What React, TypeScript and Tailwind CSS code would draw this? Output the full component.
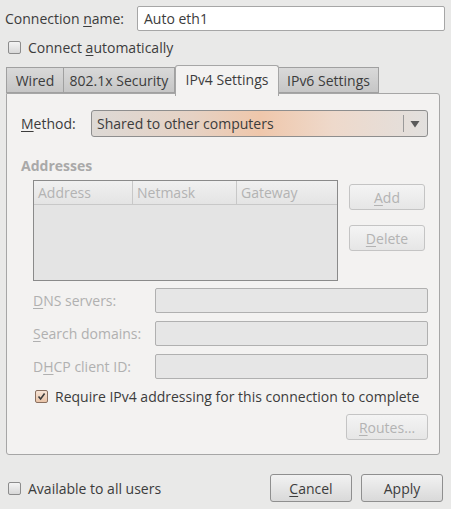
import React from 'react';

const font = { fontFamily: '"Open Sans", "DejaVu Sans", sans-serif' };

function Check({ checked }: { checked?: boolean }) {
  return (
    <span
      className={
        'flex items-center justify-center w-[13px] h-[13px] rounded-[2px] border shrink-0 ' +
        (checked
          ? 'border-[#8a7060] bg-[linear-gradient(#f6e4d6,#e9c4a8)]'
          : 'border-[#8c8c8c] bg-[linear-gradient(#f4f4f4,#d8d8d8)]')
      }
    >
      {checked && (
        <svg width="9" height="9" viewBox="0 0 9 9">
          <path d="M1.5 4.5 L3.6 7 L7.6 1.6" fill="none" stroke="#3c3c3c" strokeWidth="1.6" />
        </svg>
      )}
    </span>
  );
}

function Mn({ children }: { children: React.ReactNode }) {
  return <span className="underline underline-offset-2 decoration-1">{children}</span>;
}

function DisabledButton({ children, className }: { children: React.ReactNode; className: string }) {
  return (
    <div
      className={
        'flex items-center justify-center h-[26px] rounded-[3px] border border-[#c4c4c4] bg-[linear-gradient(#f4f4f4,#e6e6e6)] text-[#b3b3b3] ' +
        className
      }
    >
      {children}
    </div>
  );
}

function Button({ children }: { children: React.ReactNode }) {
  return (
    <div className="flex items-center justify-center w-[82px] h-[28px] rounded-[3px] border border-[#8f8f8f] bg-[linear-gradient(#f2f2f2,#d9d9d9)] text-[#3c3c3c]">
      {children}
    </div>
  );
}

const tabs = [
  { label: 'Wired', w: 'w-[58px]' },
  { label: '802.1x Security', w: 'w-[112px]' },
  { label: 'IPv4 Settings', w: 'w-[104px]', active: true },
  { label: 'IPv6 Settings', w: 'w-[101px]' },
];

export default function App() {
  return (
    <div className="w-[451px] h-[509px] bg-[#e9e9e8] text-[14px] text-[#3c3c3c] overflow-hidden" style={font}>
      {/* Connection name */}
      <div className="flex items-center pt-[6px] pl-[5px] pr-[6px]">
        <div className="w-[132px]">
          Connection <Mn>n</Mn>ame:
        </div>
        <div className="flex-1 h-[25px] flex items-center px-[6px] bg-white border border-[#a6a6a6] rounded-[2px]">
          Auto eth1
        </div>
      </div>

      <div className="flex items-center gap-[7px] h-[20px] mt-[6px] pl-[8px]">
        <Check />
        <span>
          Connect <Mn>a</Mn>utomatically
        </span>
      </div>

      {/* Tabs */}
      <div className="flex items-end h-[28px] mt-[8px] ml-[6px]">
        {tabs.map((t) =>
          t.active ? (
            <div
              key={t.label}
              className={
                'relative z-10 flex items-center justify-center h-[31px] -mb-[3px] pb-[3px] border border-b-0 border-[#a6a6a6] rounded-t-[3px] bg-[#f3f2f1] ' +
                t.w
              }
            >
              {t.label}
            </div>
          ) : (
            <div
              key={t.label}
              className={
                'flex items-center justify-center h-[26px] border border-[#a0a0a0] bg-[linear-gradient(#d9d9d9,#c6c6c6)] -ml-px first:ml-0 ' +
                t.w
              }
            >
              {t.label}
            </div>
          )
        )}
      </div>

      {/* Panel */}
      <div className="ml-[6px] mr-[11px] h-[362px] border border-[#a6a6a6] rounded-b-[3px] rounded-tr-[3px] bg-[#f3f2f1] pl-[14px] pr-[11px] pt-[16px]">
        <div className="flex items-center h-[27px]">
          <div className="w-[70px]">
            <Mn>M</Mn>ethod:
          </div>
          <div className="flex-1 h-[27px] flex items-center border border-[#8e8e8e] rounded-[3px] bg-[linear-gradient(90deg,#ddd9d5_0%,#e6d2c4_30%,#efc7ab_50%,#eed9cb_72%,#e2e0de_100%)] pl-[5px]">
            <span className="flex-1">Shared to other computers</span>
            <span className="w-px h-[17px] bg-[#9a9a9a] mr-[6px]" />
            <svg width="10" height="8" viewBox="0 0 10 8" className="mr-[7px]">
              <path d="M0.5 1 L9.5 1 L5 7.5 Z" fill="#5a5a5a" />
            </svg>
          </div>
        </div>

        <div className="h-[20px] mt-[18px] flex items-center font-bold text-[#a9a9a9]">Addresses</div>

        <div className="flex mt-[5px] pl-[12px]">
          <div className="w-[305px] h-[101px] border border-[#8a8a8a] bg-[#e4e4e4] flex flex-col">
            <div className="flex h-[24px] bg-[linear-gradient(#f0f0f0,#e4e4e4)] border-b border-[#c8c8c8] text-[#b3b3b3]">
              <div className="w-[99px] border-r border-[#c8c8c8] pl-[4px] flex items-center">Address</div>
              <div className="w-[104px] border-r border-[#c8c8c8] pl-[4px] flex items-center">Netmask</div>
              <div className="flex-1 pl-[4px] flex items-center">Gateway</div>
            </div>
          </div>
          <div className="flex flex-col gap-[15px] ml-[11px] pt-[4px]">
            <DisabledButton className="w-[76px]">
              <span>
                <Mn>A</Mn>dd
              </span>
            </DisabledButton>
            <DisabledButton className="w-[76px]">
              <span>
                <Mn>D</Mn>elete
              </span>
            </DisabledButton>
          </div>
        </div>

        <div className="flex flex-col gap-[8px] mt-[7px] pl-[12px] pr-[0px]">
          {[
            ['D', 'NS servers:', ''],
            ['S', 'earch domains:', ''],
            ['D', 'CP client ID:', 'H'],
          ].map(([a, b, c], i) => (
            <div key={i} className="flex items-center h-[25px]">
              <div className="w-[122px] text-[#b0b0b0]">
                {c ? (
                  <>
                    D<Mn>H</Mn>CP client ID:
                  </>
                ) : (
                  <>
                    <Mn>{a}</Mn>
                    {b}
                  </>
                )}
              </div>
              <div className="flex-1 h-[25px] border border-[#b0b0b0] rounded-[2px] bg-[#e6e6e6]" />
            </div>
          ))}
        </div>

        <div className="flex items-center gap-[7px] h-[20px] mt-[7px] pl-[14px]">
          <Check checked />
          <span>Require IPv4 addressing for this connection to complete</span>
        </div>

        <div className="flex justify-end mt-[8px]">
          <DisabledButton className="w-[82px]">
            <span>
              <Mn>R</Mn>outes…
            </span>
          </DisabledButton>
        </div>
      </div>

      {/* Footer */}
      <div className="flex items-center mt-[19px] pl-[8px] pr-[8px]">
        <div className="flex items-center gap-[7px] flex-1">
          <Check />
          <span>Available to all users</span>
        </div>
        <div className="flex gap-[9px]">
          <Button>
            <span>
              <Mn>C</Mn>ancel
            </span>
          </Button>
          <Button>Apply</Button>
        </div>
      </div>
    </div>
  );
}
